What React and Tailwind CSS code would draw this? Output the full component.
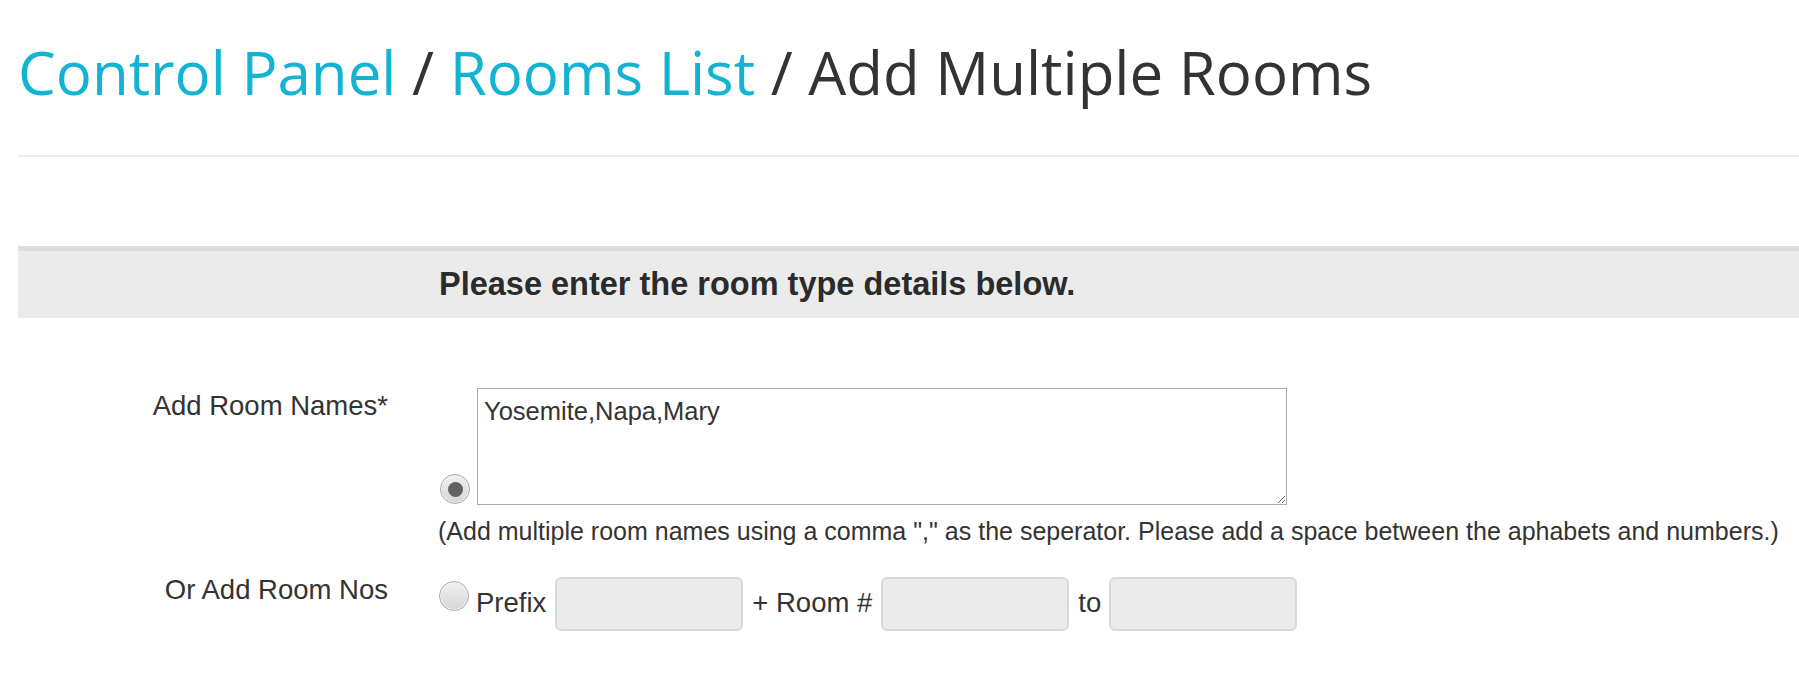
import React from "react";

function Radio({ checked }) {
  return (
    <span className="inline-flex h-[30px] w-[30px] shrink-0 items-center justify-center rounded-full border border-[#a8a8a8] bg-gradient-to-b from-[#f0f0f0] to-[#d6d6d6] shadow-[inset_0_0_0_1px_#f4f4f4]">
      {checked ? <span className="block h-[15px] w-[15px] rounded-full bg-[#616161]" /> : null}
    </span>
  );
}

function Box() {
  return <span className="block h-[54px] w-[188px] shrink-0 rounded-[6px] border-2 border-[#d9d9d9] bg-[#ebebeb]" />;
}

export default function App() {
  return (
    <div className="min-h-[673px] bg-white pl-[18px] font-['Liberation_Sans',Arial,sans-serif] text-[#333]">
      <h1 className="pt-[31px] font-['Open_Sans',sans-serif] text-[60px] font-normal leading-[82px] text-[#333]">
        <span className="text-[#12b3d3]">Control Panel</span> / <span className="text-[#12b3d3]">Rooms List</span> / Add Multiple Rooms
      </h1>
      <div className="mt-[42px] h-[2px] bg-[#ebebeb]" />

      <div className="mt-[89px] border-t-[5px] border-[#dcdcdc] bg-[#ebebeb] pb-[16px] pl-[421px] pt-[15px]">
        <div className="text-[32.5px] font-bold leading-[36px] text-[#2b2b2b]">Please enter the room type details below.</div>
      </div>

      <div className="mt-[70px] flex">
        <div className="w-[370px] shrink-0 pt-[3px] text-right text-[27.5px] leading-[30px]">Add Room Names*</div>
        <div className="ml-[50px]">
          <div className="flex items-end">
            <span className="mb-[1px] ml-[2px]">
              <Radio checked />
            </span>
            <textarea
              defaultValue="Yosemite,Napa,Mary"
              className="ml-[7px] block h-[117px] w-[810px] resize border border-[#a9a9a9] bg-white px-[6px] pt-[8px] text-[25.5px] leading-[28px] text-[#333] outline-none"
            />
          </div>
          <div className="mt-[12px] whitespace-nowrap text-[25px] leading-[28px]">
            (Add multiple room names using a comma "," as the seperator. Please add a space between the aphabets and numbers.)
          </div>
        </div>
      </div>

      <div className="mt-[30px] flex items-start">
        <div className="w-[370px] shrink-0 text-right text-[27.5px] leading-[30px]">Or Add Room Nos</div>
        <div className="ml-[51px] flex items-start text-[27.5px] leading-[30px]">
          <span className="mt-[6px]">
            <Radio />
          </span>
          <span className="ml-[7px] mt-[13px]">Prefix</span>
          <span className="ml-[9px] mt-[2px]">
            <Box />
          </span>
          <span className="ml-[9px] mt-[13px]">+ Room #</span>
          <span className="ml-[9px] mt-[2px]">
            <Box />
          </span>
          <span className="ml-[9px] mt-[13px]">to</span>
          <span className="ml-[8px] mt-[2px]">
            <Box />
          </span>
        </div>
      </div>
    </div>
  );
}
